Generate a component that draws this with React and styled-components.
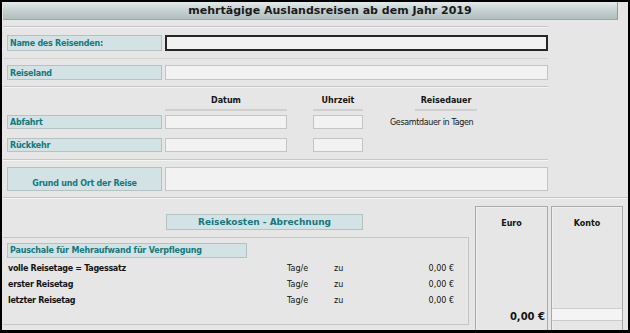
import React from 'react';
import styled, { createGlobalStyle } from 'styled-components';

// Farben
const COLORS = {
  frame: '#000000',
  bg: '#e6e6e6',
  line: '#c6c6c6',
  lineLight: '#f4f4f4',
  labelBg: '#d2e2e5',
  labelBorder: '#b4c2c4',
  teal: '#17787c',
  inputBg: '#f2f2f2',
  inputBorder: '#c4c4c4',
  text: '#141414',
  panelBorder: '#a9a9a9',
};

const FONT = `"DejaVu Sans", Verdana, sans-serif`;

const GlobalStyle = createGlobalStyle`
  *, *::before, *::after { box-sizing: border-box; }
  html, body {
    margin: 0;
    padding: 0;
    background: ${COLORS.frame};
  }
  body {
    width: 630px;
    height: 333px;
    overflow: hidden;
    font-family: ${FONT};
    padding-top: 2px;
  }
`;

const Window = styled.div`
  margin-left: 2px;
  width: 626px;
  height: 328px;
  background: ${COLORS.bg};
  overflow: hidden;
  display: flex;
  flex-direction: column;
`;

const TitleBar = styled.div`
  margin-left: 1px;
  width: 615px;
  height: 18px;
  flex: none;
  background: linear-gradient(#e2eaea, #c9d3d3 45%, #b0bebe);
  border-right: 1px solid #8e9c9c;
  border-bottom: 1px solid #9aa8a8;
  display: flex;
  align-items: center;
  justify-content: center;
  padding-left: 40px;
  font-size: 11px;
  font-weight: bold;
  color: #1b1b1b;
`;

const TopForm = styled.div`
  margin: 6px 0 0 1px;
  width: 545px;
  flex: none;
  display: flex;
  flex-direction: column;
`;

const Section = styled.div`
  border-top: 1px solid ${COLORS.line};
  box-shadow: inset 0 1px 0 ${COLORS.lineLight};
  padding: ${p => p.$pad || '0'};
  display: flex;
  flex-direction: column;
`;

const Row = styled.div`
  display: grid;
  grid-template-columns: 155px 1fr;
  column-gap: 3px;
  padding-left: 4px;
  height: ${p => p.$h || '16px'};
`;

const Label = styled.div`
  background: ${COLORS.labelBg};
  border: 1px solid ${COLORS.labelBorder};
  color: ${COLORS.teal};
  font-size: 8px;
  font-weight: bold;
  letter-spacing: -0.25px;
  display: flex;
  align-items: ${p => (p.$bottom ? 'flex-end' : 'center')};
  justify-content: ${p => (p.$center ? 'center' : 'flex-start')};
  padding: ${p => (p.$bottom ? '0 0 2px 0' : '1px 0 0 2px')};
  white-space: nowrap;
`;

const Input = styled.div`
  background: ${COLORS.inputBg};
  border: ${p => (p.$focus ? '2px solid #262626' : `1px solid ${COLORS.inputBorder}`)};
`;

const SubLine = styled.div`
  height: 1px;
  background: #d4d4d4;
  margin: 7px 0 6px 0;
`;

const DateGrid = styled.div`
  display: grid;
  grid-template-columns: 155px 3px 122px 26px 50px 52px 62px;
  padding-left: 4px;
  height: ${p => p.$h || '14px'};
  margin-top: ${p => p.$mt || '0'};
  align-items: stretch;
`;

const HeadCell = styled.div`
  grid-column: ${p => p.$col};
  font-size: 8px;
  font-weight: bold;
  color: ${COLORS.text};
  text-align: center;
  border-bottom: 2px solid #d0d0d0;
  padding-top: 1px;
`;

const InfoText = styled.div`
  grid-column: 6 / span 2;
  font-size: 8px;
  letter-spacing: -0.35px;
  color: ${COLORS.text};
  padding-left: 27px;
  white-space: nowrap;
  display: flex;
  align-items: center;
`;

const Bottom = styled.div`
  border-top: 1px solid ${COLORS.line};
  box-shadow: inset 0 1px 0 ${COLORS.lineLight};
  margin-left: 1px;
  display: grid;
  grid-template-columns: 472px 76px 72px;
  flex: 1;
  min-height: 0;
`;

const LeftCol = styled.div`
  display: flex;
  flex-direction: column;
  padding: 16px 6px 0 0;
`;

const SectionTitle = styled.div`
  margin-left: 163px;
  width: 197px;
  height: 16px;
  flex: none;
  background: ${COLORS.labelBg};
  border: 1px solid ${COLORS.labelBorder};
  color: ${COLORS.teal};
  font-size: 9px;
  font-weight: bold;
  display: flex;
  align-items: center;
  justify-content: center;
`;

const CostPanel = styled.div`
  margin-top: 7px;
  height: 88px;
  flex: none;
  border-top: 1px solid ${COLORS.line};
  border-right: 1px solid ${COLORS.line};
  border-bottom: 1px solid ${COLORS.line};
  padding: 5px 0 0 4px;
  display: flex;
  flex-direction: column;
`;

const GroupLabel = styled.div`
  width: 240px;
  height: 15px;
  flex: none;
  background: ${COLORS.labelBg};
  border: 1px solid ${COLORS.labelBorder};
  color: ${COLORS.teal};
  font-size: 8px;
  font-weight: bold;
  letter-spacing: -0.2px;
  display: flex;
  align-items: center;
  padding-left: 2px;
  margin-bottom: 2px;
`;

const CostRow = styled.div`
  display: grid;
  grid-template-columns: 279px 47px 40px 80px;
  height: 16px;
  flex: none;
  align-items: center;
  font-size: 8px;
  color: ${COLORS.text};
  padding-left: 1px;
`;

const CostName = styled.span`
  font-weight: bold;
  letter-spacing: -0.3px;
`;

const Amount = styled.span`
  text-align: right;
`;

const SidePanel = styled.div`
  margin-top: 8px;
  margin-right: ${p => p.$mr || '0'};
  border: 1px solid ${COLORS.panelBorder};
  border-bottom: none;
  box-shadow: inset 1px 1px 0 #f0f0f0;
  display: flex;
  flex-direction: column;
  align-items: stretch;
`;

const SideHead = styled.div`
  font-size: 8px;
  font-weight: bold;
  color: ${COLORS.text};
  text-align: center;
  padding-top: 12px;
`;

const SideTotal = styled.div`
  margin-top: auto;
  margin-bottom: 8px;
  text-align: right;
  padding-right: 2px;
  font-size: 10px;
  font-weight: bold;
  color: ${COLORS.text};
`;

const KontoInput = styled.div`
  margin-top: auto;
  margin-bottom: 9px;
  height: 13px;
  background: #f4f4f4;
  border-top: 1px solid #d0d0d0;
  border-bottom: 1px solid #cbcbcb;
`;

const costs = [
  'volle Reisetage = Tagessatz',
  'erster Reisetag',
  'letzter Reisetag',
];

export default function App() {
  return (
    <>
      <GlobalStyle />
      <Window>
        <TitleBar>mehrtägige Auslandsreisen ab dem Jahr 2019</TitleBar>

        <TopForm>
          <Section $pad="8px 0 6px 0">
            <Row>
              <Label>Name des Reisenden:</Label>
              <Input $focus />
            </Row>
            <SubLine />
            <Row $h="15px">
              <Label>Reiseland</Label>
              <Input />
            </Row>
          </Section>

          <Section $pad="8px 0 7px 0">
            <DateGrid $h="16px">
              <HeadCell $col="3">Datum</HeadCell>
              <HeadCell $col="5">Uhrzeit</HeadCell>
              <HeadCell $col="7">Reisedauer</HeadCell>
            </DateGrid>
            <DateGrid $mt="4px">
              <Label>Abfahrt</Label>
              <span />
              <Input />
              <span />
              <Input />
              <InfoText>Gesamtdauer in Tagen</InfoText>
            </DateGrid>
            <DateGrid $mt="9px">
              <Label>Rückkehr</Label>
              <span />
              <Input />
              <span />
              <Input />
            </DateGrid>
          </Section>

          <Section $pad="7px 0 6px 0">
            <Row $h="24px">
              <Label $bottom $center>Grund und Ort der Reise</Label>
              <Input />
            </Row>
          </Section>
        </TopForm>

        <Bottom>
          <LeftCol>
            <SectionTitle>Reisekosten - Abrechnung</SectionTitle>
            <CostPanel>
              <GroupLabel>Pauschale für Mehraufwand für Verpflegung</GroupLabel>
              {costs.map(c => (
                <CostRow key={c}>
                  <CostName>{c}</CostName>
                  <span>Tag/e</span>
                  <span>zu</span>
                  <Amount>0,00 €</Amount>
                </CostRow>
              ))}
            </CostPanel>
          </LeftCol>
          <SidePanel $mr="3px">
            <SideHead>Euro</SideHead>
            <SideTotal>0,00 €</SideTotal>
          </SidePanel>
          <SidePanel>
            <SideHead>Konto</SideHead>
            <KontoInput />
          </SidePanel>
        </Bottom>
      </Window>
    </>
  );
}
